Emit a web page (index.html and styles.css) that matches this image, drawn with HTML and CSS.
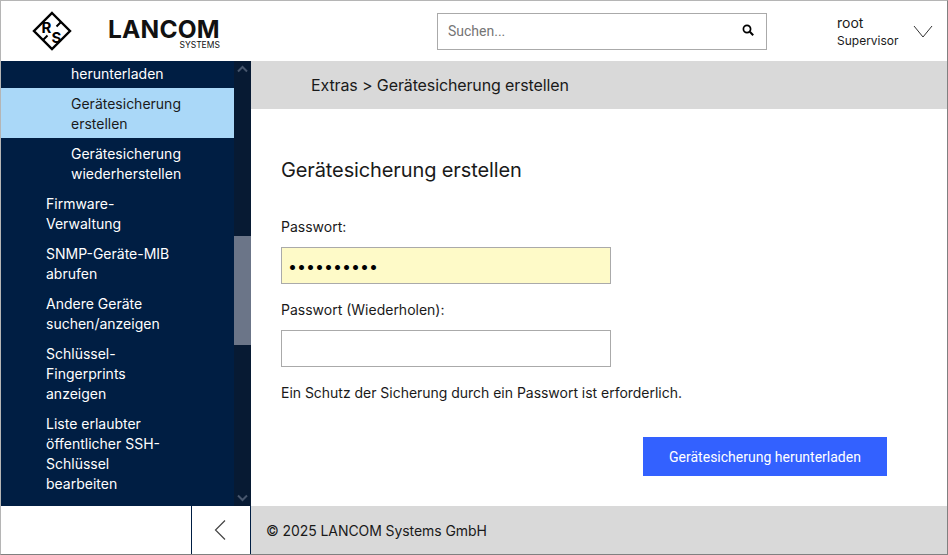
FILE: index.html
```html
<!doctype html>
<html lang="de">
  <head>
    <meta charset="UTF-8" />
    <title>Gerätesicherung erstellen | LANCOM</title>
    <link rel="stylesheet" href="styles.css">
  </head>

  <body>
    <div class="frame">
      <header class="topbar">
        <div class="brand">
          <svg class="rs-logo" viewBox="0 0 40 40" width="40" height="40">
            <path d="M20 2 L38 20 L20 38 L2 20 Z" fill="none" stroke="#000" stroke-width="2.4" />
            <path d="M29 11 L24.5 15.5 M15.5 24.5 L11 29" stroke="#000" stroke-width="2" />
            <text x="9.5" y="21.5" class="rs-letter">R</text>
            <text x="19.5" y="31.5" class="rs-letter">S</text>
          </svg>
          <div class="wordmark">
            <span class="wordmark-name">LANCOM</span>
            <span class="wordmark-sub">SYSTEMS</span>
          </div>
        </div>
        <div class="search">
          <input type="text" placeholder="Suchen..." />
          <svg viewBox="0 0 12 12" width="12" height="12">
            <circle cx="5" cy="5" r="3.6" fill="none" stroke="#000" stroke-width="1.7" />
            <path d="M7.8 7.8 L11.2 11.2" stroke="#000" stroke-width="2" />
          </svg>
        </div>
        <div class="user">
          <div class="user-name">
            <div>root</div>
            <small>Supervisor</small>
          </div>
          <svg viewBox="0 0 20 14" width="20" height="14">
            <path d="M1 1 L10 12 L19 1" fill="none" stroke="#333" stroke-width="1" />
          </svg>
        </div>
      </header>

      <aside class="sidebar">
        <nav class="menu">
          <a class="sub first">herunterladen</a>
          <a class="sub active">Gerätesicherung<br />erstellen</a>
          <a class="sub">Gerätesicherung<br />wiederherstellen</a>
          <a class="marked">Firmware-<br />Verwaltung</a>
          <a>SNMP-Geräte-MIB<br />abrufen</a>
          <a>Andere Geräte<br />suchen/anzeigen</a>
          <a>Schlüssel-<br />Fingerprints<br />anzeigen</a>
          <a>Liste erlaubter<br />öffentlicher SSH-<br />Schlüssel<br />bearbeiten</a>
        </nav>
        <div class="scrollbar">
          <svg viewBox="0 0 17 17" width="17" height="17">
            <path d="M4 10.5 L8.5 6 L13 10.5" fill="none" stroke="#47566d" stroke-width="2" />
          </svg>
          <div class="track"><div class="thumb"></div></div>
          <svg viewBox="0 0 17 17" width="17" height="17">
            <path d="M4 6.5 L8.5 11 L13 6.5" fill="none" stroke="#47566d" stroke-width="2" />
          </svg>
        </div>
      </aside>

      <main class="content">
        <div class="crumbs">Extras &gt; Gerätesicherung erstellen</div>
        <section class="panel">
          <h2>Gerätesicherung erstellen</h2>
          <label for="pw1">Passwort:</label>
          <input class="field filled" id="pw1" type="password" value="••••••••••" />
          <label for="pw2">Passwort (Wiederholen):</label>
          <input class="field" id="pw2" type="password" />
          <p>Ein Schutz der Sicherung durch ein Passwort ist erforderlich.</p>
          <div class="actions">
            <button>Gerätesicherung herunterladen</button>
          </div>
        </section>
      </main>

      <div class="collapse">
        <div class="collapse-btn">
          <svg viewBox="0 0 12 20" width="12" height="20">
            <path d="M11 0.5 L1.5 10 L11 19.5" fill="none" stroke="#444" stroke-width="1.2" />
          </svg>
        </div>
      </div>
      <footer class="footer">© 2025 LANCOM Systems GmbH</footer>
    </div>
  </body>
</html>
```

FILE: styles.css
```css
html,
body {
  margin: 0;
  height: 100%;
}
body {
  font-family: Inter, "Liberation Sans", sans-serif;
  font-size: 14px;
  color: #1a1a1a;
  background: white;
}
.frame {
  box-sizing: border-box;
  width: 948px;
  height: 555px;
  border: 1px solid #b5b5b5;
  border-bottom-color: #808080;
  border-right-color: #808080;
  display: grid;
  grid-template-columns: 250px 1fr;
  grid-template-rows: 60px 445px 48px;
  overflow: hidden;
}

/* top bar */
.topbar {
  grid-column: 1 / 3;
  display: flex;
  align-items: center;
}
.brand {
  width: 436px;
  display: flex;
  align-items: center;
  padding-left: 31px;
  box-sizing: border-box;
}
.rs-logo {
  flex: none;
}
.rs-letter {
  font-family: Inter, sans-serif;
  font-size: 15px;
  font-weight: 700;
}
.wordmark {
  margin-left: 36px;
  margin-top: 5px;
  display: flex;
  flex-direction: column;
  align-items: flex-end;
  color: #111;
}
.wordmark-name {
  font-size: 24.5px;
  font-weight: 700;
  line-height: 24px;
  letter-spacing: 0.2px;
}
.wordmark-sub {
  font-size: 8.5px;
  line-height: 9px;
}
.search {
  box-sizing: border-box;
  width: 330px;
  height: 37px;
  border: 1px solid #aaa;
  display: flex;
  align-items: center;
  padding: 0 12px 0 10px;
}
.search input {
  flex: 1;
  border: none;
  outline: none;
  padding: 0;
  font-family: Roboto, sans-serif;
  font-size: 14px;
}
.search input::placeholder {
  color: #757575;
}
.search svg {
  margin-bottom: 2px;
}
.user {
  display: flex;
  align-items: center;
  margin-left: 70px;
}
.user-name {
  width: 76px;
  line-height: 18px;
  margin-top: 1px;
}
.user-name small {
  font-size: 12px;
  display: block;
}
.user svg {
  margin-top: 1px;
}

/* sidebar */
.sidebar {
  margin-left: -1px;
  background: #001e43;
  display: flex;
  overflow: hidden;
}
.menu {
  flex: 1;
  color: white;
  line-height: 20px;
}
.menu a {
  display: block;
  padding: 6px 10px 4px 46px;
  position: relative;
}
.menu a.sub {
  padding-left: 71px;
}
.menu a.first {
  padding-top: 3px;
}
.menu a.active {
  background: #aad8f8;
  color: #1a1a1a;
  margin-left: 1px;
  padding-left: 70px;
}
.menu a.marked::before {
  content: "";
  position: absolute;
  left: 0;
  top: 0;
  width: 1px;
  height: 30px;
  background: #6f8ea8;
}
.scrollbar {
  width: 17px;
  background: #071a33;
  display: flex;
  flex-direction: column;
}
.scrollbar svg {
  flex: none;
}
.track {
  flex: 1;
  padding-top: 158px;
}
.thumb {
  height: 109px;
  background: #6b7588;
}

/* content */
.content {
  display: flex;
  flex-direction: column;
}
.crumbs {
  background: #d9d9d9;
  height: 48px;
  line-height: 48px;
  padding-left: 60px;
  font-size: 16px;
  letter-spacing: -0.12px;
}
.panel {
  padding: 48px 30px 0;
  display: flex;
  flex-direction: column;
  align-items: flex-start;
}
h2 {
  font-size: 20px;
  font-weight: 400;
  line-height: 26px;
  letter-spacing: -0.12px;
  margin: 0 0 34px;
}
label {
  line-height: 20px;
  margin-bottom: 10px;
}
.field {
  box-sizing: border-box;
  width: 330px;
  height: 37px;
  border: 1px solid #aaa;
  padding: 0 6px;
  margin-bottom: 16px;
  font-family: Inter, sans-serif;
  font-size: 16px;
  outline: none;
}
.field.filled {
  background: #fefac8;
}
p {
  margin: 0;
  line-height: 20px;
  letter-spacing: -0.025px;
}
.actions {
  align-self: stretch;
  display: flex;
  justify-content: flex-end;
  margin-top: 34px;
  padding-right: 30px;
}
button {
  width: 244px;
  height: 39px;
  border: none;
  background: #3361ff;
  color: white;
  font-family: Roboto, sans-serif;
  font-size: 14px;
  cursor: pointer;
}

/* bottom row */
.collapse {
  margin-left: -1px;
  display: flex;
  justify-content: flex-end;
}
.collapse-btn {
  box-sizing: border-box;
  width: 60px;
  border-left: 1px solid #001e43;
  border-right: 1px solid #001e43;
  padding-right: 3px;
  display: flex;
  align-items: center;
  justify-content: center;
}
.footer {
  background: #d9d9d9;
  line-height: 50px;
  padding-left: 15px;
  letter-spacing: -0.08px;
}
```
